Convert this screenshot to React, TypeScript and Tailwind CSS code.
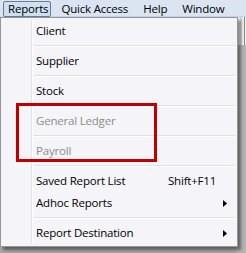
import { ReactNode } from 'react';

type Row =
  | { kind: 'item'; label: string; disabled?: boolean; shortcut?: string; submenu?: boolean }
  | { kind: 'sep' };

const rows: Row[] = [
  { kind: 'item', label: 'Client' },
  { kind: 'sep' },
  { kind: 'item', label: 'Supplier' },
  { kind: 'sep' },
  { kind: 'item', label: 'Stock' },
  { kind: 'sep' },
  { kind: 'item', label: 'General Ledger', disabled: true },
  { kind: 'sep' },
  { kind: 'item', label: 'Payroll', disabled: true },
  { kind: 'sep' },
  { kind: 'item', label: 'Saved Report List', shortcut: 'Shift+F11' },
  { kind: 'item', label: 'Adhoc Reports', submenu: true },
  { kind: 'sep' },
  { kind: 'item', label: 'Report Destination', submenu: true },
];

const font = { fontFamily: "'Segoe UI', 'Open Sans', 'Noto Sans', sans-serif" };

const BarItem = ({ children, active }: { children: ReactNode; active?: boolean }) => (
  <div
    className={
      active
        ? 'h-[16px] pl-[4px] pr-[2px] flex items-center rounded-[2px] border border-[#6b7b90] bg-[#cfdef0] text-black'
        : 'h-[16px] px-[7px] flex items-center text-black'
    }
  >
    {children}
  </div>
);

export default function App() {
  return (
    <div
      className="relative w-[246px] h-[253px] overflow-hidden bg-[#a8a8a8] text-[11.5px] tracking-[-0.2px] leading-none"
      style={font}
    >
      {/* menu bar */}
      <div className="h-[17px] bg-[#dbe5f2] flex items-start pt-[1px] pl-[3px] gap-[1px] border-b border-[#c6d3e3]">
        <BarItem active>Reports</BarItem>
        <div className="w-[1px]" />
        <BarItem>Quick Access</BarItem>
        <BarItem>Help</BarItem>
        <BarItem>Window</BarItem>
      </div>

      {/* window behind the menu */}
      <div className="absolute left-[236px] top-[17px] w-[10px] h-[236px] bg-[#b4b4b4]">
        <div className="h-[28px] bg-[#f0f0f0] flex justify-end gap-[2px] pr-[1px]">
          <div className="w-[1px] bg-[#8a8a8a]" />
          <div className="w-[2px] bg-[#d6d6d6]" />
          <div className="w-[1px] bg-[#8a8a8a]" />
        </div>
      </div>

      {/* dropdown */}
      <div className="absolute left-0 top-[17px] w-[238px] h-[230px] bg-[#f5f4f8] border border-[#979797] shadow-[3px_3px_3px_rgba(0,0,0,0.45)] py-[2px]">
        <div className="absolute left-[30px] top-[2px] bottom-[2px] w-[2px] border-l border-[#e2e3e3] bg-white" />
        {rows.map((r, i) =>
          r.kind === 'sep' ? (
            <div key={i} className="h-[8px] flex items-center pl-[33px] pr-[2px]">
              <div className="h-[2px] w-full border-t border-[#e0e0e0] bg-white" />
            </div>
          ) : (
            <div
              key={i}
              className={`h-[22px] flex items-center pl-[35px] ${r.disabled ? 'text-[#8d8d8d]' : 'text-black'}`}
            >
              <span className="w-[132px]">{r.label}</span>
              {r.shortcut && <span>{r.shortcut}</span>}
              {r.submenu && (
                <svg className="ml-[55px]" width="4" height="7" viewBox="0 0 4 7">
                  <path d="M0 0 L4 3.5 L0 7 Z" fill="#000" />
                </svg>
              )}
            </div>
          )
        )}
      </div>

      {/* red highlight box */}
      <div className="absolute left-[16px] top-[103px] w-[141px] h-[59px] border-[3px] border-[#c00000]" />
    </div>
  );
}
